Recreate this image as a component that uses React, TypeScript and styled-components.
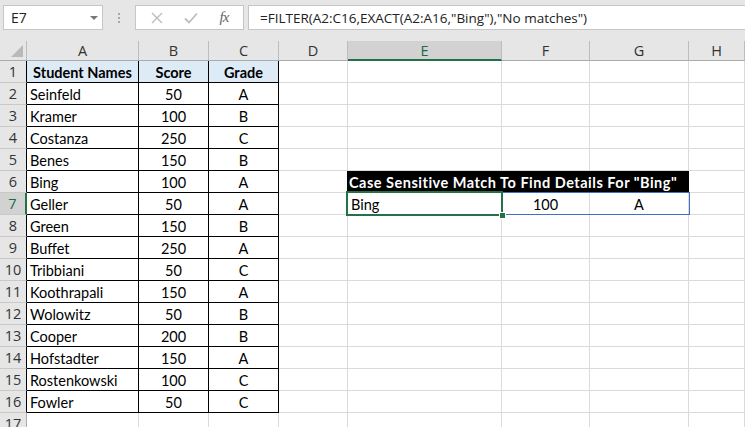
import React from 'react';
import styled, { createGlobalStyle } from 'styled-components';

const GlobalStyle = createGlobalStyle`
  html, body {
    margin: 0;
    padding: 0;
    background: #ffffff;
    overflow: hidden;
  }
  body {
    font-family: Lato, "Liberation Sans", sans-serif;
  }
`;

const Window = styled.div`
  width: 745px;
  height: 427px;
  overflow: hidden;
  background: #ffffff;
`;

const FormulaBar = styled.div`
  display: flex;
  align-items: flex-start;
  height: 41px;
  box-sizing: border-box;
  padding-top: 5px;
  background: #e6e6e6;
`;

const NameBox = styled.div`
  width: 100px;
  height: 25px;
  box-sizing: border-box;
  margin-left: 3px;
  padding: 0 4px 0 7px;
  background: #ffffff;
  border: 1px solid #c6c6c6;
  display: flex;
  align-items: center;
  justify-content: space-between;
  font-family: "Open Sans", sans-serif;
  font-size: 14px;
  color: #222;
`;

const DropArrow = styled.span`
  width: 0;
  height: 0;
  border-left: 4px solid transparent;
  border-right: 4px solid transparent;
  border-top: 4px solid #777;
`;

const Grip = styled.div`
  width: 32px;
  height: 25px;
  display: flex;
  flex-direction: column;
  align-items: center;
  justify-content: center;
  gap: 2px;

  span {
    width: 2px;
    height: 2px;
    background: #a8a8a8;
  }
`;

const FxBox = styled.div`
  width: 109px;
  height: 25px;
  box-sizing: border-box;
  background: #ffffff;
  border: 1px solid #c6c6c6;
  display: flex;
  align-items: center;
  justify-content: space-around;
  padding: 0 4px;
`;

const FxLabel = styled.i`
  font-family: "Liberation Serif", serif;
  font-size: 15px;
  color: #666;
  letter-spacing: -1px;
`;

const FormulaInput = styled.div`
  flex: 1;
  height: 25px;
  box-sizing: border-box;
  margin-left: 4px;
  padding-left: 11px;
  background: #ffffff;
  border: 1px solid #c6c6c6;
  border-right: none;
  display: flex;
  align-items: center;
  font-family: "Open Sans", sans-serif;
  font-size: 13.5px;
  color: #222;
  white-space: nowrap;
`;

const Sheet = styled.div`
  display: grid;
  grid-template-columns: 27px 112px 70px 70px 69px 154px 88px 99px 56px;
  grid-template-rows: 20px;
  grid-auto-rows: 22px;
`;

const Corner = styled.div`
  background: #e6e6e6;
  border-right: 1px solid #bdbdbd;
  border-bottom: 1px solid #ababab;
  box-sizing: border-box;
  display: flex;
  align-items: flex-end;
  justify-content: flex-end;
  padding: 0 3px 3px 0;
`;

const ColHead = styled.div<{ $active?: boolean }>`
  box-sizing: border-box;
  background: ${p => (p.$active ? '#d2d2d2' : '#e6e6e6')};
  border-right: 1px solid #bdbdbd;
  border-bottom: ${p => (p.$active ? '2px solid #217346' : '1px solid #ababab')};
  display: flex;
  align-items: center;
  justify-content: center;
  font-family: "Open Sans", sans-serif;
  font-size: 14.5px;
  color: ${p => (p.$active ? '#1e6b41' : '#333')};
`;

const RowHead = styled.div<{ $active?: boolean; $edge?: string }>`
  box-sizing: border-box;
  background: ${p => (p.$active ? '#d2d2d2' : '#e6e6e6')};
  border-bottom: 1px solid #c9c9c9;
  border-right: ${p => (p.$active ? '2px solid #217346' : `1px solid ${p.$edge || '#ababab'}`)};
  display: flex;
  align-items: center;
  justify-content: center;
  font-family: "Open Sans", sans-serif;
  font-size: 14.5px;
  color: ${p => (p.$active ? '#1e6b41' : '#333')};
`;

const Cell = styled.div<{ $line?: string; $bg?: string; $center?: boolean; $bold?: boolean; $span?: number }>`
  position: relative;
  box-sizing: border-box;
  grid-column: ${p => (p.$span ? `span ${p.$span}` : 'auto')};
  background: ${p => p.$bg || '#ffffff'};
  border-right: 1px solid ${p => p.$line || '#dadada'};
  border-bottom: 1px solid ${p => p.$line || '#dadada'};
  display: flex;
  align-items: center;
  justify-content: ${p => (p.$center ? 'center' : 'flex-start')};
  padding: 1px 3px 0;
  font-size: 14.5px;
  font-weight: ${p => (p.$bold ? 700 : 400)};
  color: #000;
  white-space: nowrap;
`;

const Banner = styled(Cell)`
  background: #000000;
  border-color: #000000;
  color: #ffffff;
  font-weight: 700;
  letter-spacing: 0.5px;
  padding-left: 2px;
  margin-left: -1px;
`;

const SpillOutline = styled.div`
  position: absolute;
  left: -1px;
  top: -1px;
  width: 343px;
  height: 23px;
  box-sizing: border-box;
  border: 1px solid #3f6fc6;
  z-index: 1;
  pointer-events: none;
`;

const Selection = styled.div`
  position: absolute;
  left: -2px;
  top: -2px;
  right: -2px;
  bottom: -2px;
  border: 2px solid #217346;
  z-index: 2;
  pointer-events: none;
`;

const FillHandle = styled.span`
  position: absolute;
  right: -5px;
  bottom: -5px;
  width: 5px;
  height: 5px;
  background: #217346;
  border: 1px solid #ffffff;
`;

const students: [string, number, string][] = [
  ['Seinfeld', 50, 'A'],
  ['Kramer', 100, 'B'],
  ['Costanza', 250, 'C'],
  ['Benes', 150, 'B'],
  ['Bing', 100, 'A'],
  ['Geller', 50, 'A'],
  ['Green', 150, 'B'],
  ['Buffet', 250, 'A'],
  ['Tribbiani', 50, 'C'],
  ['Koothrapali', 150, 'A'],
  ['Wolowitz', 50, 'B'],
  ['Cooper', 200, 'B'],
  ['Hofstadter', 150, 'A'],
  ['Rostenkowski', 100, 'C'],
  ['Fowler', 50, 'C'],
];

const columns = ['A', 'B', 'C', 'D', 'E', 'F', 'G', 'H'];

function CrossIcon() {
  return (
    <svg width="12" height="12" viewBox="0 0 12 12">
      <path d="M1 1 L11 11 M11 1 L1 11" stroke="#bdbdbd" strokeWidth="1.4" fill="none" />
    </svg>
  );
}

function CheckIcon() {
  return (
    <svg width="14" height="12" viewBox="0 0 14 12">
      <path d="M1 6.5 L5 10.5 L13 1.5" stroke="#bdbdbd" strokeWidth="1.8" fill="none" />
    </svg>
  );
}

function TableRow({ row }: { row: number }) {
  const inTable = row <= 16;
  const line = inTable ? '#000000' : undefined;
  let a: React.ReactNode = null;
  let b: React.ReactNode = null;
  let c: React.ReactNode = null;
  if (row >= 2 && row <= 16) {
    [a, b, c] = students[row - 2];
  }

  const tableCells =
    row === 1 ? (
      <>
        <Cell $line={line} $bg="#ddebf7" $bold $center>Student Names</Cell>
        <Cell $line={line} $bg="#ddebf7" $bold $center>Score</Cell>
        <Cell $line={line} $bg="#ddebf7" $bold $center>Grade</Cell>
      </>
    ) : (
      <>
        <Cell $line={line}>{a}</Cell>
        <Cell $line={line} $center>{b}</Cell>
        <Cell $line={line} $center>{c}</Cell>
      </>
    );

  let rest: React.ReactNode;
  if (row === 6) {
    rest = (
      <>
        <Cell />
        <Banner $span={3}>Case Sensitive Match To Find Details For "Bing"</Banner>
        <Cell />
      </>
    );
  } else if (row === 7) {
    rest = (
      <>
        <Cell />
        <Cell>
          Bing
          <SpillOutline />
          <Selection>
            <FillHandle />
          </Selection>
        </Cell>
        <Cell $center>100</Cell>
        <Cell $center>A</Cell>
        <Cell />
      </>
    );
  } else {
    rest = (
      <>
        <Cell />
        <Cell />
        <Cell />
        <Cell />
        <Cell />
      </>
    );
  }

  return (
    <>
      <RowHead $active={row === 7} $edge={inTable ? '#000000' : undefined}>{row}</RowHead>
      {tableCells}
      {rest}
    </>
  );
}

export default function App() {
  const rows = Array.from({ length: 17 }, (_, i) => i + 1);
  return (
    <Window>
      <GlobalStyle />
      <FormulaBar>
        <NameBox>
          E7
          <DropArrow />
        </NameBox>
        <Grip>
          <span />
          <span />
          <span />
        </Grip>
        <FxBox>
          <CrossIcon />
          <CheckIcon />
          <FxLabel>fx</FxLabel>
        </FxBox>
        <FormulaInput>=FILTER(A2:C16,EXACT(A2:A16,"Bing"),"No matches")</FormulaInput>
      </FormulaBar>
      <Sheet>
        <Corner>
          <svg width="12" height="12" viewBox="0 0 12 12">
            <polygon points="12,0 12,12 0,12" fill="#b9b9b9" />
          </svg>
        </Corner>
        {columns.map(col => (
          <ColHead key={col} $active={col === 'E'}>{col}</ColHead>
        ))}
        {rows.map(r => (
          <TableRow key={r} row={r} />
        ))}
      </Sheet>
    </Window>
  );
}
